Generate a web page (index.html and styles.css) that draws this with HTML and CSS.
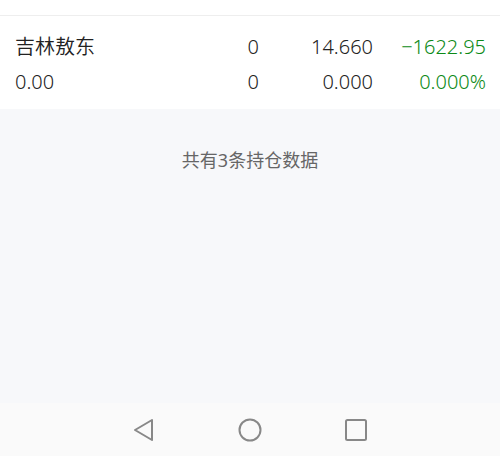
FILE: index.html
```html
<!DOCTYPE html>
<html lang="zh">
<head>
<meta charset="utf-8">
<link rel="stylesheet" href="styles.css">
</head>
<body>
<div class="screen">
  <div class="top"></div>
  <div class="holding">
    <div class="row">
      <span class="c name">吉林敖东</span>
      <span class="c num n1">0</span>
      <span class="c num n2">14.660</span>
      <span class="c num n3 green">−1622.95</span>
    </div>
    <div class="row">
      <span class="c name">0.00</span>
      <span class="c num n1">0</span>
      <span class="c num n2">0.000</span>
      <span class="c num n3 green">0.000%</span>
    </div>
  </div>
  <div class="content">
    <div class="count">共有3条持仓数据</div>
  </div>
  <div class="navbar">
    <svg class="nav" width="24" height="24" viewBox="0 0 24 24"><path d="M20 2 L3 12 L20 22 Z" fill="none" stroke="#888" stroke-width="2" stroke-linejoin="round"/></svg>
    <svg class="nav" width="24" height="24" viewBox="0 0 24 24"><circle cx="12" cy="12" r="10.5" fill="none" stroke="#888" stroke-width="2"/></svg>
    <svg class="nav" width="24" height="24" viewBox="0 0 24 24"><rect x="2" y="2" width="20" height="20" rx="1.5" fill="none" stroke="#888" stroke-width="2"/></svg>
  </div>
</div>
</body>
</html>
```
FILE: styles.css
```css
html, body { margin: 0; padding: 0; }
body {
  font-family: "Noto Sans", "Noto Sans CJK SC", sans-serif;
  background: #f7f8fa;
}
.screen {
  width: 500px;
  height: 456px;
  display: flex;
  flex-direction: column;
  overflow: hidden;
}
.top {
  height: 15px;
  background: #fff;
  border-bottom: 1px solid #eeeeee;
}
.holding {
  background: #fff;
  padding: 22px 14px 12px 15px;
  height: 59px;
}
.row {
  display: flex;
  align-items: center;
  height: 35px;
  font-size: 20px;
  font-weight: 350;
  color: #222;
  line-height: 35px;
}
.row:first-child { margin-top: -9px; }
.c { white-space: nowrap; }
.name { flex: 1; }
.num { text-align: right; }
.n1 { width: 60px; }
.n2 { width: 114px; }
.n3 { width: 113px; }
.green { color: #0c8a17; }
.content {
  flex: 1;
  background: #f7f8fa;
  padding-top: 37px;
}
.count {
  text-align: center;
  font-size: 18px;
  color: #666;
}
.navbar {
  height: 53px;
  background: #fafafa;
  display: flex;
  align-items: center;
  justify-content: center;
  gap: 82px;
}
.nav { display: block; }
```
